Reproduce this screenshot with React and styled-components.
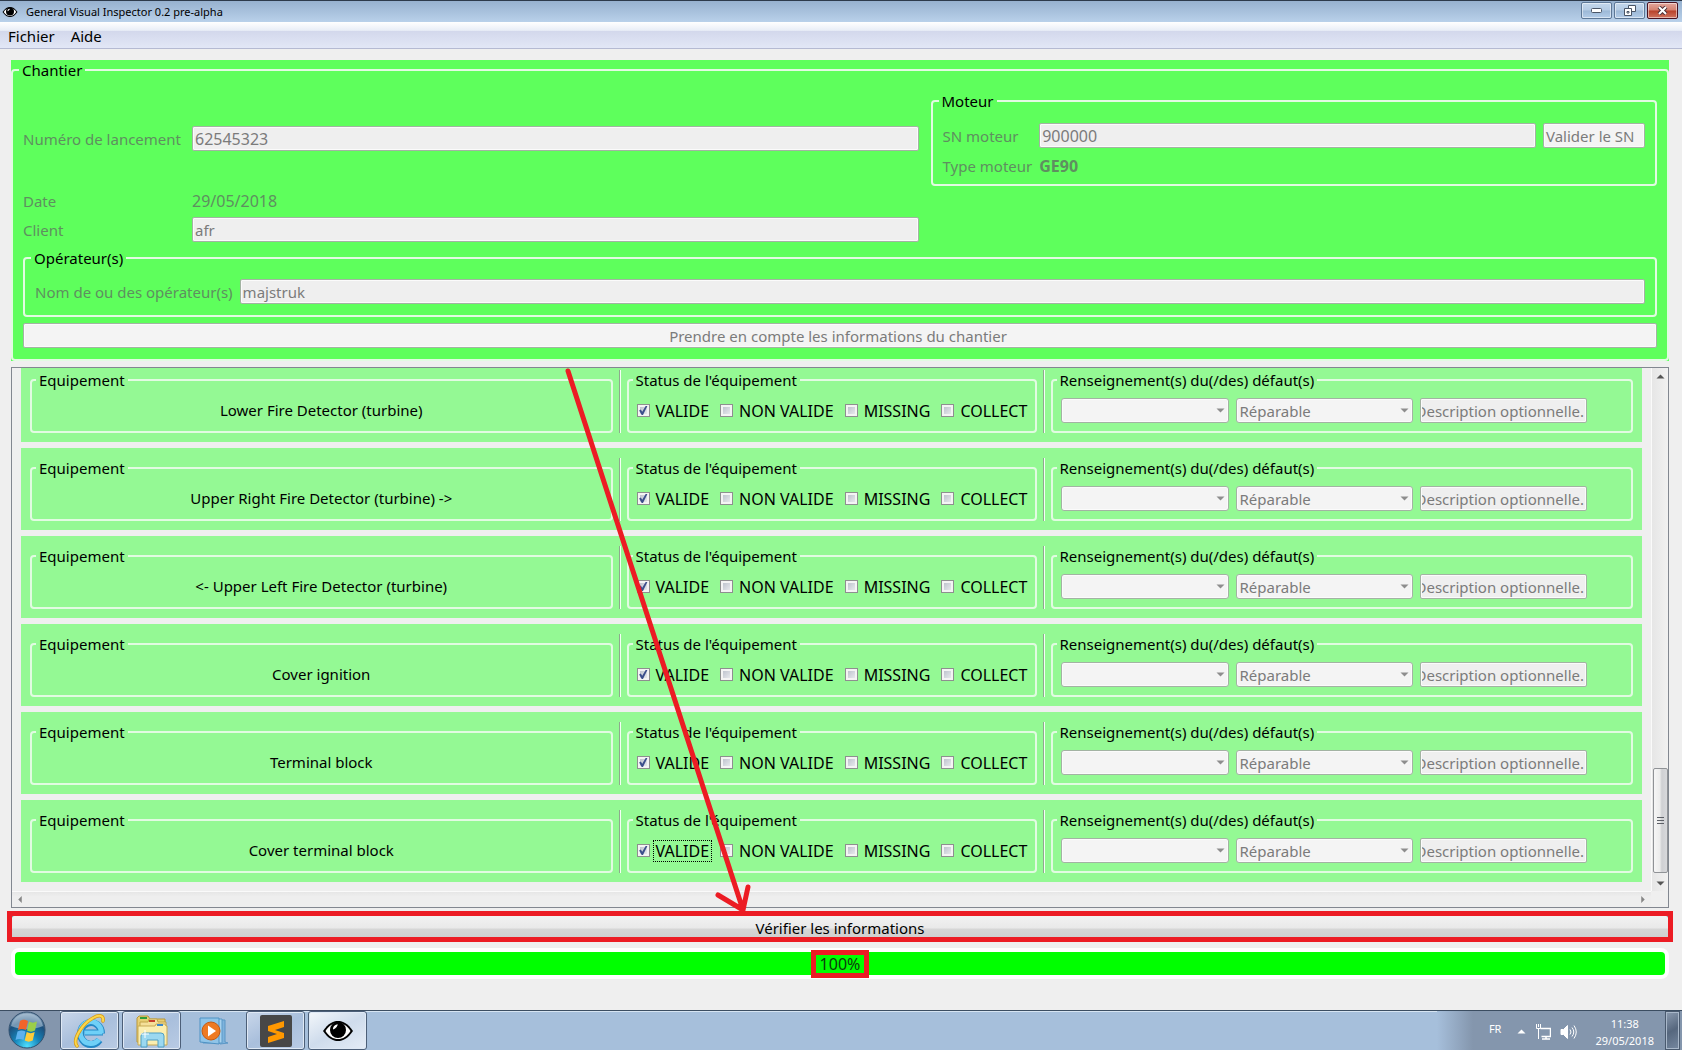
import React from "react";
import styled, { createGlobalStyle, css } from "styled-components";

const GlobalStyle = createGlobalStyle`
  *, *::before, *::after { box-sizing: border-box; }
  body { margin: 0; background: #efefef; }
  body, button, input, select {
    font-family: "Noto Sans", Tahoma, sans-serif;
    font-size: 15px;
    line-height: 20px;
    color: #000;
  }
`;

const Desktop = styled.div`
  position: relative;
  display: flex;
  flex-direction: column;
  min-height: 100vh;
  background: #efefef;
`;

/* ---------- title bar ---------- */

const TitleBar = styled.header`
  display: flex;
  align-items: center;
  height: 22px;
  padding: 0 4px 0 2px;
  border-top: 1px solid #2d3a4b;
  background: linear-gradient(#97b1cf, #b9d1ea);
`;

const Title = styled.h1`
  flex: 1;
  margin: 0 0 0 8px;
  font-size: 11px;
  line-height: 20px;
  font-weight: 400;
`;

const Captions = styled.div`
  display: flex;
  gap: 2px;
  padding-bottom: 2px;
`;

const Caption = styled.button`
  display: flex;
  align-items: center;
  justify-content: center;
  width: 31px;
  height: 17px;
  padding: 0;
  border: 1px solid ${(p) => (p.$close ? "#4a1220" : "#5d7796")};
  border-radius: 2px;
  box-shadow: inset 0 0 0 1px rgba(255, 255, 255, 0.5);
  background: ${(p) =>
    p.$close
      ? "linear-gradient(#e3a79d, #d4806f 48%, #b8412a 52%, #cf7460)"
      : "linear-gradient(#c4d7ec, #b4cbe4 48%, #9cb8d6 52%, #b3cce8)"};
`;

/* ---------- menu ---------- */

const MenuBar = styled.nav`
  display: flex;
  align-items: flex-start;
  gap: 16px;
  height: 27px;
  padding: 4px 8px 0;
  border-bottom: 1px solid #b5bad2;
  background: linear-gradient(#ffffff, #e9eef7 32%, #d3d8ec 36%, #e2e7f6);
`;

const MenuItem = styled.button`
  padding: 0;
  border: 0;
  background: none;
  line-height: 20px;
`;

/* ---------- shared form parts ---------- */

const Group = styled.fieldset`
  min-width: 0;
  margin: 0;
  padding: ${(p) => p.$pad || "8px"};
  border: 2px solid #e2fbe2;
  border-radius: 4px;
`;

const Legend = styled.legend`
  height: 20px;
  margin-left: -4px;
  padding: 0 3px;
`;

const field = css`
  height: 25px;
  border: 1px solid #a3b3a3;
  border-radius: 2px;
  box-shadow: inset 0 0 0 1px #fbfbfb;
  color: #7b7b7b;
  opacity: 1;
`;

const TextInput = styled.input`
  ${field}
  width: 100%;
  min-width: 0;
  padding: 0 2px;
  background: #efefef;
  font-size: ${(p) => (p.$numeric ? 16 : 15)}px;
`;

const ClippedInput = styled(TextInput)`
  width: 167px;
  padding: 0 1px;
  text-indent: -6px;
`;

const PushButton = styled.button`
  ${field}
  flex-shrink: 0;
  padding: 0 6px 0 2px;
  background: #f4f4f4;
`;

const ValidateButton = styled(PushButton)`
  min-width: 102px;
  text-align: left;
`;

const Label = styled.label`
  color: #5f8f60;
  white-space: nowrap;
`;

const Value = styled.span`
  color: #5f8f60;
  font-size: 16px;
  font-weight: ${(p) => (p.$strong ? 700 : 400)};
  line-height: 19px;
`;

/* ---------- work site panel ---------- */

const Content = styled.main`
  flex: 1;
  display: flex;
  flex-direction: column;
  padding: 11px 13px 31px 11px;
`;

const SitePanel = styled.section`
  background: #5eff5c;
`;

const SiteGrid = styled.div`
  display: grid;
  grid-template-columns: 157px 1fr 1fr;
  align-items: center;
  gap: 6px 12px;
  margin-bottom: 6px;
`;

const DateLabel = styled(Label)`
  line-height: 19px;
`;

const FullRow = styled.div`
  grid-column: 1 / 3;
  display: grid;
  grid-template-columns: 157px 1fr;
  align-items: center;
  column-gap: 12px;
`;

const MotorGrid = styled.div`
  display: grid;
  grid-template-columns: max-content 1fr max-content;
  align-items: center;
  gap: 8px 7px;
`;

const OperatorLine = styled.div`
  display: flex;
  align-items: center;
  gap: 7px;
`;

const WideButton = styled(PushButton)`
  display: block;
  width: 100%;
  margin-top: 6px;
`;

/* ---------- equipment list ---------- */

const ScrollFrame = styled.section`
  flex: 1;
  display: grid;
  grid-template-columns: 1fr 17px;
  grid-template-rows: 1fr 16px;
  margin-top: 6px;
  border: 1px solid #828790;
`;

const Viewport = styled.div`
  display: flex;
  flex-direction: column;
  justify-content: flex-end;
  gap: 6px;
  min-height: 0;
  height: 523px;
  padding: 0 9px 9px;
  overflow: hidden;
`;

const Row = styled.article`
  flex-shrink: 0;
  display: grid;
  grid-template-columns: 1fr 2px 410px 2px 1fr;
  gap: 6px;
  padding: 10px 9px 9px;
  background: #94f994;
`;

const Divider = styled.div`
  border-left: 1px solid #8fa98f;
  border-right: 1px solid #f4fff4;
`;

const EquipmentName = styled.p`
  margin: 0;
  text-align: center;
  line-height: 25px;
`;

const Checks = styled.div`
  display: flex;
  gap: 9px;
`;

const CheckLabel = styled.label`
  display: flex;
  align-items: center;
  gap: 4px;
  height: 25px;
  font-size: 16px;
  white-space: nowrap;
`;

const CheckBox = styled.input`
  appearance: none;
  width: 13px;
  height: 13px;
  margin: 0;
  border: 1px solid #8e8f8f;
  box-shadow: inset 0 0 0 2px #f4f4f4;
  background: linear-gradient(135deg, #b4bac6, #f2f3f5);

  &:checked::before {
    content: "";
    display: block;
    width: 11px;
    height: 11px;
    background: #3c4f8c;
    clip-path: polygon(15% 50%, 30% 42%, 43% 62%, 74% 8%, 90% 8%, 50% 92%, 38% 92%);
  }
`;

const CheckText = styled.span`
  padding: 0 2px;
  outline: ${(p) => (p.$focused ? "1px dotted #000" : "none")};
`;

const Faults = styled.div`
  display: flex;
  gap: 7px;
`;

const Combo = styled.div`
  position: relative;
  width: ${(p) => p.$width}px;

  svg {
    position: absolute;
    top: 8px;
    right: 4px;
  }
`;

const Select = styled.select`
  ${field}
  appearance: none;
  width: 100%;
  padding: 0 3px;
  border-radius: 3px;
  background: #f4f4f4;
`;

const VerticalBar = styled.div`
  display: flex;
  flex-direction: column;
  align-items: center;
  border-left: 1px solid #fafafa;
  background: linear-gradient(90deg, #e6e6e6, #f1f1f1);
`;

const HorizontalBar = styled.div`
  display: flex;
  align-items: center;
  justify-content: space-between;
  padding: 0 4px;
  border-top: 1px solid #fafafa;
  background: linear-gradient(#e6e6e6, #eeeeee 30%);
`;

const BarArrow = styled.button`
  display: flex;
  align-items: center;
  justify-content: center;
  width: 16px;
  height: 16px;
  padding: 0;
  border: 0;
  background: none;
`;

const HorizontalArrow = styled(BarArrow)`
  width: 8px;
  height: 14px;
`;

const Track = styled.div`
  flex: 1;
  display: flex;
  flex-direction: column;
  justify-content: flex-end;
  width: 15px;
  padding-bottom: 2px;
`;

const Thumb = styled.div`
  display: flex;
  align-items: center;
  justify-content: center;
  height: 105px;
  border: 1px solid #8f9296;
  border-radius: 2px;
  background: linear-gradient(90deg, #f6f6f6, #ececec 45%, #cfd0d3 60%, #d8d9dc);
`;

/* ---------- footer controls ---------- */

const Marked = styled.div`
  position: relative;
  margin-top: 7px;

  &::after {
    content: "";
    position: absolute;
    inset: -4px -4px 0;
    border: 5px solid #ec1c24;
    pointer-events: none;
  }
`;

const CheckButton = styled.button`
  display: block;
  width: 100%;
  height: 27px;
  padding: 0;
  border: 1px solid #707070;
  border-radius: 3px;
  background: linear-gradient(#f2f2f2, #e9e9e9 48%, #d6d6d6 52%, #cccccc);
  line-height: 25px;
`;

const Progress = styled.div`
  display: flex;
  justify-content: center;
  margin-top: 6px;
  height: 31px;
  border: 4px solid #fff;
  border-radius: 8px;
  background: #00ff00;
`;

const Percent = styled.span`
  position: relative;
  height: 23px;
  padding: 0 5px;
  color: #0c3c0c;
  font-size: 16px;
  line-height: 24px;

  &::after {
    content: "";
    position: absolute;
    inset: -2px -4px -3px;
    border: 5px solid #ec1c24;
  }
`;

const ArrowLayer = styled.svg`
  position: absolute;
  top: 364px;
  left: 560px;
  pointer-events: none;
`;

/* ---------- task bar ---------- */

const TaskBar = styled.footer`
  display: flex;
  height: 40px;
  border-top: 1px solid #3b4d61;
  box-shadow: inset 0 1px 0 #d6e4f2;
  background: #a6bfdb;
`;

const Start = styled.button`
  width: 60px;
  height: 39px;
  padding: 0 6px 0 0;
  border: 0;
  background: #8496ad;
`;

const Task = styled.button`
  display: flex;
  align-items: center;
  justify-content: center;
  width: 59px;
  height: 39px;
  margin-right: 3px;
  padding: 0;
  border: 1px solid ${(p) => (p.$open ? "#4c5f78" : "transparent")};
  border-radius: 3px;
  box-shadow: ${(p) => (p.$open ? "inset 0 0 0 1px #dfe9f5" : "none")};
  background: ${(p) =>
    p.$active
      ? "linear-gradient(150deg, #f3f7fb, #cfdcec 50%, #e4ecf6)"
      : p.$open
      ? "linear-gradient(150deg, #c9d7ea, #a9bfdc 50%, #b9cbe4)"
      : "none"};
`;

const Tray = styled.div`
  display: flex;
  align-items: center;
  margin-left: auto;
  padding-left: 52px;
  background: linear-gradient(90deg, #a6bfdb, #8496ad 36px);
  color: #fff;
  font-size: 11px;
`;

const Language = styled.span`
  padding-bottom: 4px;
`;

const TrayIcons = styled.div`
  display: flex;
  align-items: center;
  gap: 9px;
  margin: 2px 18px 0 16px;
`;

const Clock = styled.time`
  display: flex;
  flex-direction: column;
  margin-right: 11px;
  padding-top: 2px;
  text-align: center;
  line-height: 17px;
`;

const ShowDesktop = styled.button`
  width: 15px;
  height: 39px;
  margin-right: 2px;
  padding: 0;
  border: 1px solid #49596e;
  box-shadow: inset 0 0 0 1px #a9b8ca;
  background: linear-gradient(150deg, #8b9bb0, #56677e 50%, #7688a0);
`;

/* ---------- drawings ---------- */

const Eye = ({ width, height }) => (
  <svg width={width} height={height} viewBox="0 0 32 22" aria-hidden="true">
    <path d="M1 11C6 3.500 11 1 16 1s10 2.500 15 10c-5 7.500-10 10-15 10S6 18.500 1 11z" fill="#000" />
    <path d="M3.500 11C7 5.500 11 3 16 3s9 2.500 12.500 8C25 16.500 21 19 16 19s-9-2.500-12.500-8z" fill="#fff" />
    <circle cx="16" cy="10" r="8" fill="#000" />
    <path d="M11 9.500C11 6 13 4.500 16 4.500c-1 1.500-1.500 4-5 5z" fill="#fff" />
  </svg>
);

const Triangle = ({ dir = "down", color = "#555" }) => {
  const turn = { down: 0, left: 90, up: 180, right: 270 }[dir];
  return (
    <svg width="9" height="9" viewBox="0 0 9 9" aria-hidden="true">
      <path d="M0.500 2.500h8l-4 4z" fill={color} transform={`rotate(${turn} 4.500 4.500)`} />
    </svg>
  );
};

const StartOrb = () => (
  <svg width="38" height="38" viewBox="0 0 38 38" aria-hidden="true">
    <defs>
      <radialGradient id="orb" cx="0.500" cy="0.950" r="0.900">
        <stop offset="0" stopColor="#4fe0ff" />
        <stop offset="0.400" stopColor="#1583b8" />
        <stop offset="0.750" stopColor="#1d4f7c" />
        <stop offset="1" stopColor="#7f9bb5" />
      </radialGradient>
    </defs>
    <circle cx="19" cy="19" r="18" fill="url(#orb)" stroke="#33516f" />
    <path d="M3 15C5 6 12 2.500 19 2.500S33 6 35 15c-8 4-24 4-32 0z" fill="#c9dbe9" opacity="0.500" />
    <path d="M12 10c3-2 5-1.500 8 0l-2 9c-3-1.500-5-1.500-8 0z" fill="#f0642b" />
    <path d="M21 10.500c3 1.500 5 1.500 8 0l-2 9c-3 1.500-5 1.500-8 0z" fill="#9bcf4a" />
    <path d="M9.500 20.500c3-1.500 5-1.500 8 0l-2 8.500c-3-1.500-5-1.500-8 0z" fill="#5db1ee" />
    <path d="M18.700 21c3 1.500 5 1.500 8 0l-2 8.500c-3 1.500-5 1.500-8 0z" fill="#fdcc3a" />
  </svg>
);

const Explorer = () => (
  <svg width="34" height="36" viewBox="0 0 34 36" aria-hidden="true">
    <path d="M30 19.500H11.500" stroke="#2488c6" strokeWidth="6" />
    <path d="M28.500 20.500A10.500 11 0 1 0 26.500 27" fill="none" stroke="#2488c6" strokeWidth="7" />
    <path d="M29.500 19.500H11.500" stroke="#6fd0f7" strokeWidth="4" />
    <path d="M28.300 20A10.500 11 0 1 0 26 26.500" fill="none" stroke="#6fd0f7" strokeWidth="5" />
    <path d="M4 33C-1 27 9 11 20 5c6-3.500 11-3 10 3" fill="none" stroke="#d99a12" strokeWidth="3.500" strokeLinecap="round" />
    <path d="M4 33C-1 27 9 11 20 5c6-3.500 11-3 10 3" fill="none" stroke="#fbd74c" strokeWidth="2" strokeLinecap="round" />
  </svg>
);

const Folders = () => (
  <svg width="34" height="34" viewBox="0 0 34 34" aria-hidden="true">
    <path d="M2 28V4l2-2h9l2 3h15v24z" fill="#e8cf74" stroke="#b99637" />
    <rect x="5" y="3" width="7" height="2" fill="#2f9e3a" />
    <path d="M5 30V8h8l1-3h8l1 3h8v22z" fill="#f4e09a" stroke="#c3a448" />
    <rect x="14" y="6" width="6" height="2" fill="#c8402c" />
    <path d="M3 31V12h17l1-2h9l1 2h1v19z" fill="#fbeeb0" stroke="#c8ab55" />
    <rect x="22" y="10" width="6" height="2" fill="#3c87c9" />
    <path d="M6 33V22q0-3 3-3h17q3 0 3 3v11h-6v-7H12v7z" fill="#9bd8f0" stroke="#4f9fc4" />
    <path d="M10 16v8M6 20h8" stroke="#fff" />
  </svg>
);

const MediaPlayer = () => (
  <svg width="30" height="28" viewBox="0 0 30 28" aria-hidden="true">
    <path d="M6 3l20 0v22l3 1-8 1z" fill="#7eb3dc" stroke="#5b97c6" />
    <path d="M4 2h19v24H4z" fill="#a8d2ee" stroke="#5b9ac9" />
    <path d="M1 1h19v26L1 25z" fill="#8fc4e8" stroke="#4f92c4" />
    <circle cx="12" cy="14" r="9" fill="#ee7a22" stroke="#c65a10" />
    <path d="M9 8.500v11l8-5.500z" fill="#fff" />
  </svg>
);

const Sublime = () => (
  <svg width="32" height="32" viewBox="0 0 32 32" aria-hidden="true">
    <rect width="32" height="32" rx="2" fill="#474747" />
    <path d="M24 6v6l-9 3 9 3v5L8 28v-6l9-3-9-3v-5z" fill="#ff9800" />
  </svg>
);

const Network = () => (
  <svg width="16" height="16" viewBox="0 0 16 16" aria-hidden="true" fill="none" stroke="#fff">
    <path d="M5.500 4.500h10v8h-9M11 12.500v2M7 15h8" strokeWidth="1.500" />
    <path d="M1.500 0v4.500h4V0M3.500 0v3M3.500 5v10" />
  </svg>
);

const Speaker = () => (
  <svg width="17" height="16" viewBox="0 0 17 16" aria-hidden="true" fill="none" stroke="#fff">
    <path d="M1 5.500h2.500l4-4v13l-4-4H1z" fill="#fff" />
    <path d="M10 5.500q2 2.500 0 5M12 3.500q3.500 4.500 0 9M14 1.500q4.500 6.500 0 13" />
  </svg>
);

/* ---------- data ---------- */

const equipment = [
  "Lower Fire Detector (turbine)",
  "Upper Right Fire Detector (turbine) ->",
  "<- Upper Left Fire Detector (turbine)",
  "Cover ignition",
  "Terminal block",
  "Cover terminal block",
];
const statuses = ["VALIDE", "NON VALIDE", "MISSING", "COLLECT"];

function EquipmentRow({ name, focused }) {
  return (
    <Row>
      <Group>
        <Legend>Equipement</Legend>
        <EquipmentName>{name}</EquipmentName>
      </Group>
      <Divider />
      <Group>
        <Legend>Status de l'équipement</Legend>
        <Checks>
          {statuses.map((status, i) => (
            <CheckLabel key={status}>
              <CheckBox type="checkbox" defaultChecked={i === 0} />
              <CheckText $focused={focused && i === 0}>{status}</CheckText>
            </CheckLabel>
          ))}
        </Checks>
      </Group>
      <Divider />
      <Group>
        <Legend>Renseignement(s) du(/des) défaut(s)</Legend>
        <Faults>
          <Combo $width={168}>
            <Select disabled aria-label="Défaut">
              <option></option>
            </Select>
            <Triangle color="#8d8d8d" />
          </Combo>
          <Combo $width={177}>
            <Select disabled aria-label="Réparabilité">
              <option>Réparable</option>
            </Select>
            <Triangle color="#8d8d8d" />
          </Combo>
          <ClippedInput disabled aria-label="Description" defaultValue="Description optionnelle." />
        </Faults>
      </Group>
    </Row>
  );
}

export default function App() {
  return (
    <Desktop>
      <GlobalStyle />
      <TitleBar>
        <Eye width={16} height={12} />
        <Title>General Visual Inspector 0.2 pre-alpha</Title>
        <Captions>
          <Caption aria-label="Réduire">
            <svg width="11" height="5" viewBox="0 0 11 5">
              <rect x="0.500" y="0.500" width="10" height="4" rx="1" fill="#fff" stroke="#4a5566" />
            </svg>
          </Caption>
          <Caption aria-label="Restaurer">
            <svg width="12" height="11" viewBox="0 0 12 11" fill="#fff" stroke="#4a5566">
              <path d="M4.500 0.500h7v6h-7z" />
              <path d="M0.500 3.500h7v7h-7z" />
              <path d="M3 6.500h2v1.500H3z" />
            </svg>
          </Caption>
          <Caption $close aria-label="Fermer">
            <svg width="11" height="9" viewBox="0 0 11 9">
              <path d="M2 1l7 7M9 1L2 8" stroke="#4b3038" strokeWidth="4" />
              <path d="M2 1l7 7M9 1L2 8" stroke="#fff" strokeWidth="2" />
            </svg>
          </Caption>
        </Captions>
      </TitleBar>
      <MenuBar>
        <MenuItem>Fichier</MenuItem>
        <MenuItem>Aide</MenuItem>
      </MenuBar>

      <Content>
        <SitePanel>
          <Group $pad="11px 10px 11px">
            <Legend>Chantier</Legend>
            <SiteGrid>
              <Label htmlFor="launch">Numéro de lancement</Label>
              <TextInput id="launch" $numeric disabled defaultValue="62545323" />
              <Group $pad="12px 10px 8px">
                <Legend>Moteur</Legend>
                <MotorGrid>
                  <Label htmlFor="sn">SN moteur</Label>
                  <TextInput id="sn" $numeric disabled defaultValue="900000" />
                  <ValidateButton disabled>Valider le SN</ValidateButton>
                  <Label as="span">Type moteur</Label>
                  <Value $strong>GE90</Value>
                </MotorGrid>
              </Group>
              <FullRow>
                <DateLabel as="span">Date</DateLabel>
                <Value>29/05/2018</Value>
              </FullRow>
              <span />
              <Label htmlFor="client">Client</Label>
              <TextInput id="client" disabled defaultValue="afr" />
            </SiteGrid>
            <Group $pad="11px 10px">
              <Legend>Opérateur(s)</Legend>
              <OperatorLine>
                <Label htmlFor="operators">Nom de ou des opérateur(s)</Label>
                <TextInput id="operators" disabled defaultValue="majstruk" />
              </OperatorLine>
            </Group>
            <WideButton disabled>Prendre en compte les informations du chantier</WideButton>
          </Group>
        </SitePanel>

        <ScrollFrame>
          <Viewport>
            {equipment.map((name, i) => (
              <EquipmentRow key={name} name={name} focused={i === equipment.length - 1} />
            ))}
          </Viewport>
          <VerticalBar>
            <BarArrow aria-label="Défiler vers le haut">
              <Triangle dir="up" />
            </BarArrow>
            <Track>
              <Thumb>
                <svg width="7" height="9" viewBox="0 0 7 9" aria-hidden="true">
                  <path d="M0 1.500h7M0 4.500h7M0 7.500h7" stroke="#5c5f66" />
                </svg>
              </Thumb>
            </Track>
            <BarArrow aria-label="Défiler vers le bas">
              <Triangle />
            </BarArrow>
          </VerticalBar>
          <HorizontalBar>
            <HorizontalArrow aria-label="Défiler à gauche">
              <Triangle dir="left" color="#858585" />
            </HorizontalArrow>
            <HorizontalArrow aria-label="Défiler à droite">
              <Triangle dir="right" color="#858585" />
            </HorizontalArrow>
          </HorizontalBar>
        </ScrollFrame>

        <Marked>
          <CheckButton>Vérifier les informations</CheckButton>
        </Marked>
        <Progress role="progressbar" aria-label="Progression" aria-valuenow={100}>
          <Percent>100%</Percent>
        </Progress>
      </Content>

      <TaskBar>
        <Start aria-label="Démarrer">
          <StartOrb />
        </Start>
        <Task $open aria-label="Internet Explorer">
          <Explorer />
        </Task>
        <Task $open aria-label="Explorateur">
          <Folders />
        </Task>
        <Task aria-label="Lecteur multimédia">
          <MediaPlayer />
        </Task>
        <Task $open aria-label="Sublime Text">
          <Sublime />
        </Task>
        <Task $open $active aria-label="General Visual Inspector">
          <Eye width={32} height={22} />
        </Task>
        <Tray>
          <Language>FR</Language>
          <TrayIcons>
            <Triangle dir="up" color="#fff" />
            <Network />
            <Speaker />
          </TrayIcons>
          <Clock>
            <span>11:38</span>
            <span>29/05/2018</span>
          </Clock>
          <ShowDesktop aria-label="Afficher le bureau" />
        </Tray>
      </TaskBar>

      <ArrowLayer width="200" height="552" viewBox="0 0 200 552" aria-hidden="true">
        <path
          d="M8 7L183 546M158 531L183 546L188 523"
          fill="none"
          stroke="#ec1c24"
          strokeWidth="5"
          strokeLinecap="round"
        />
      </ArrowLayer>
    </Desktop>
  );
}
